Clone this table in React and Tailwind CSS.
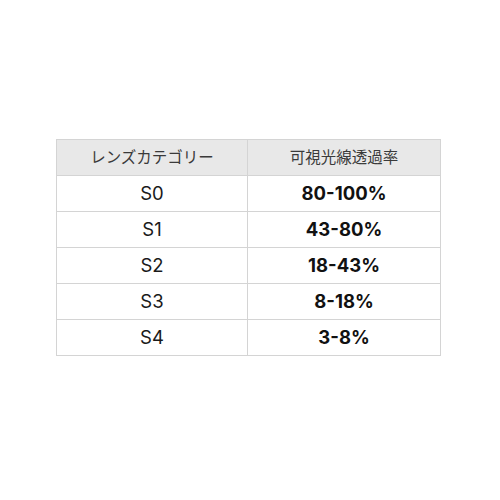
const rows = [
  ['S0', '80-100%'],
  ['S1', '43-80%'],
  ['S2', '18-43%'],
  ['S3', '8-18%'],
  ['S4', '3-8%'],
]

export default function App() {
  return (
    <div className="w-[500px] h-[500px] bg-white pt-[139px] pl-[56px]" style={{ fontFamily: 'Inter, "Noto Sans CJK JP", sans-serif' }}>
      <table className="w-[385px] border-collapse border border-[#d4d4d4] text-center">
        <thead>
          <tr className="bg-[#e8e8e8] h-[36px]">
            <th className="w-[191px] border border-[#d4d4d4] font-normal text-[15.5px] text-[#3a3a3a] p-0">レンズカテゴリー</th>
            <th className="border border-[#d4d4d4] font-normal text-[15.5px] text-[#3a3a3a] p-0">可視光線透過率</th>
          </tr>
        </thead>
        <tbody>
          {rows.map(([cat, val]) => (
            <tr key={cat} className="h-[36px]">
              <td className="border border-[#d4d4d4] text-[18.5px] text-[#1a1a1a] p-0">{cat}</td>
              <td className="border border-[#d4d4d4] text-[18.5px] font-bold text-[#111] p-0">{val}</td>
            </tr>
          ))}
        </tbody>
      </table>
    </div>
  )
}
